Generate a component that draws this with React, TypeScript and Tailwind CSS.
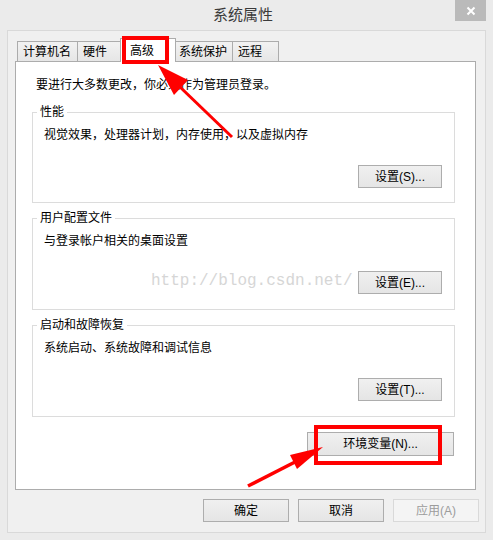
import React from "react";

const font = "font-['Liberation_Sans','Noto_Sans_CJK_SC',sans-serif]";

const Btn = ({ label, w, disabled }: { label: string; w: string; disabled?: boolean }) => (
  <button
    className={`${w} h-[23px] border text-[12px] leading-none ${
      disabled
        ? "border-[#d9d9d9] bg-[#f4f4f4] text-[#9c9c9c]"
        : "border-[#adadad] bg-linear-to-b from-[#f0f0f0] to-[#e5e5e5] text-black"
    }`}
  >
    {label}
  </button>
);

const Group = ({ title, text, btn, h }: { title: string; text: string; btn: string; h: string }) => (
  <fieldset className={`w-[423px] ${h} border border-[#dcdcdc] px-[11px]`}>
    <legend className="ml-[-7px] px-[3px] text-[12px] leading-[16px] text-black">{title}</legend>
    <p className="mt-[7px] text-[12px] leading-[16px] text-black">{text}</p>
    <div className="mt-[22px] flex justify-end pr-[1px]">
      <Btn label={btn} w="w-[84px]" />
    </div>
  </fieldset>
);

export default function App() {
  return (
    <div className={`relative w-[493px] h-[540px] overflow-hidden bg-[#ebebeb] ${font}`}>
      {/* title bar */}
      <div className="flex h-[30px] items-start">
        <div className="flex-1" />
        <div className="text-[15px] leading-[30px] text-[#3a3a3a]">系统属性</div>
        <div className="flex flex-1 justify-end pr-[7px]">
          <div className="flex h-[21px] w-[31px] items-center justify-center bg-[#bababa]">
            <svg width="10" height="10" viewBox="0 0 10 10">
              <path d="M1.5 1.5 L8.5 8.5 M8.5 1.5 L1.5 8.5" stroke="#fff" strokeWidth="2" />
            </svg>
          </div>
        </div>
      </div>

      {/* window body */}
      <div className="mx-[7px] h-[503px] border border-[#d9d9d9] bg-[#f0f0f0] pl-[7px] pt-[7px]">
        <div className="flex h-[23px] items-end pl-[2px] text-[12px] text-black">
          <div className="flex h-[20px] w-[61px] items-center border border-b-0 border-[#acacac] bg-linear-to-b from-[#f2f2f2] to-[#e6e6e6] pl-[5px]">计算机名</div>
          <div className="-ml-px flex h-[20px] w-[46px] items-center border border-b-0 border-[#acacac] bg-linear-to-b from-[#f2f2f2] to-[#e6e6e6] pl-[5px]">硬件</div>
          <div className="relative z-10 -mb-px -ml-[3px] flex h-[24px] w-[56px] items-center border border-b-0 border-[#acacac] bg-white pl-[9px]">高级</div>
          <div className="-ml-[2px] flex h-[20px] w-[59px] items-center border border-b-0 border-[#acacac] bg-linear-to-b from-[#f2f2f2] to-[#e6e6e6] pl-[4px]">系统保护</div>
          <div className="-ml-px flex h-[20px] w-[47px] items-center border border-b-0 border-[#acacac] bg-linear-to-b from-[#f2f2f2] to-[#e6e6e6] pl-[5px]">远程</div>
        </div>

        <div className="h-[429px] w-[461px] border border-[#acacac] bg-white pl-[16px] pt-[15px]">
          <p className="ml-[4px] text-[12px] leading-[16px] text-black">要进行大多数更改，你必须作为管理员登录。</p>
          <div className="mt-[11px] flex flex-col gap-[7px]">
            <Group h="h-[99px]" title="性能" text="视觉效果，处理器计划，内存使用，以及虚拟内存" btn="设置(S)..." />
            <Group h="h-[100px]" title="用户配置文件" text="与登录帐户相关的桌面设置" btn="设置(E)..." />
            <Group h="h-[100px]" title="启动和故障恢复" text="系统启动、系统故障和调试信息" btn="设置(T)..." />
          </div>
          <div className="mt-[15px] flex w-[423px] justify-end pr-[1px]">
            <Btn label="环境变量(N)..." w="w-[147px] h-[24px]" />
          </div>
        </div>

        <div className="mt-[9px] flex justify-end gap-[9px] pr-[6px]">
          <Btn label="确定" w="w-[86px]" />
          <Btn label="取消" w="w-[86px]" />
          <Btn label="应用(A)" w="w-[86px]" disabled />
        </div>
      </div>

      {/* watermark */}
      <div className="pointer-events-none absolute left-[151px] top-[272px] z-20 font-['Liberation_Mono',monospace] text-[16px] leading-[18px] text-[#d6d6d6]">
        http://blog.csdn.net/
      </div>

      {/* annotations */}
      <div className="pointer-events-none absolute left-[122px] top-[36px] z-30 h-[28px] w-[47px] border-[4px] border-[#ff0000]" />
      <div className="pointer-events-none absolute left-[314px] top-[425px] z-30 h-[40px] w-[128px] border-[4px] border-[#ff0000]" />
      <svg className="pointer-events-none absolute left-0 top-0 z-30" width="493" height="540" viewBox="0 0 493 540">
        <line x1="232" y1="137" x2="180" y2="87" stroke="#ff0000" strokeWidth="3" />
        <polygon points="158,65 188,80 174,95" fill="#ff0000" />
        <line x1="248" y1="486" x2="295" y2="462" stroke="#ff0000" strokeWidth="3.5" />
        <polygon points="323,447 297,469 290,455" fill="#ff0000" />
      </svg>
    </div>
  );
}
